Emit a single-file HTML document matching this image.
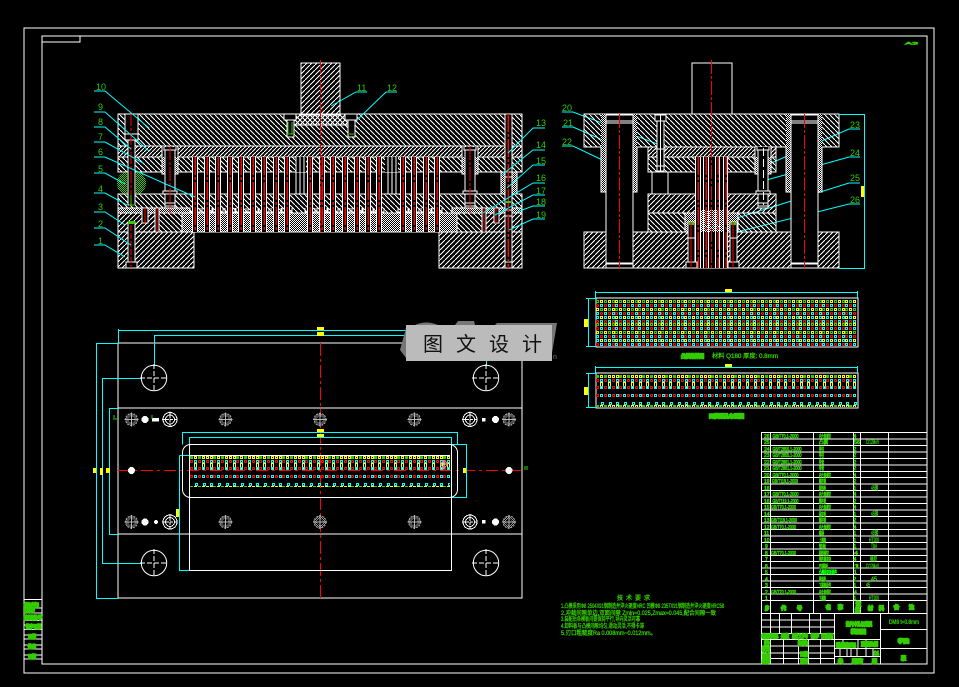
<!DOCTYPE html>
<html><head><meta charset="utf-8"><title>CAD</title>
<style>
html,body{margin:0;padding:0;background:#000;}
svg{display:block;}
text{font-family:"Liberation Sans","Noto Sans CJK SC",sans-serif;}
.l{fill:#3c0;font-size:9px;}
.b{fill:#3c0;stroke:#3c0;stroke-width:.6;font-size:5px;}
.s{fill:#3c0;stroke:#3c0;stroke-width:1.6;font-size:5px;}
.t{fill:#3c0;stroke:#3c0;stroke-width:.3;font-size:6px;}
</style></head><body>
<svg width="959" height="687" viewBox="0 0 959 687" xmlns="http://www.w3.org/2000/svg">
<defs>
<pattern id="hb" width="5" height="5" patternUnits="userSpaceOnUse"><path d="M-1 -1L6 6" stroke="#fff" stroke-width="1" shape-rendering="crispEdges"/></pattern>
<pattern id="hf" width="5" height="5" patternUnits="userSpaceOnUse"><path d="M-1 6L6 -1" stroke="#fff" stroke-width="1" shape-rendering="crispEdges"/></pattern>
<pattern id="hd" width="4" height="4" patternUnits="userSpaceOnUse"><path d="M-1 5L5 -1" stroke="#fff" stroke-width="1" shape-rendering="crispEdges"/></pattern>
<pattern id="st" width="2" height="2" patternUnits="userSpaceOnUse"><rect width="1" height="1" fill="#fff"/><rect x="1" y="1" width="1" height="1" fill="#fff"/></pattern>
<pattern id="gs" width="2" height="2" patternUnits="userSpaceOnUse"><rect width="1" height="1" fill="#3c0"/><rect x="1" y="1" width="1" height="1" fill="#3c0"/></pattern>
<pattern id="gy" width="2" height="2" patternUnits="userSpaceOnUse"><rect width="1" height="1" fill="#999"/><rect x="1" y="1" width="1" height="1" fill="#999"/></pattern>
<pattern id="p1" x="190" y="456" width="23" height="30" patternUnits="userSpaceOnUse">
<g fill="none" stroke-width="1">
<path d="M4.5 7.500h2v5h-2zM12.500 7.500h2v5h-2zM20.500 7.500h2v5h-2z" stroke="#ff0"/>
<path d="M4.500 .5h2v2h-2zM12.500 .5h2v2h-2zM16.500 .5h2v2h-2zM20.500 .5h2v2h-2z" stroke="#ff0"/>
<path d="M0 0h3v3h-3zM8 0h3v3h-3z" fill="#3c0" stroke="none"/>
<path d="M.5 4.500h2v2h-2zM8.500 4.500h2v2h-2zM16.500 4.500h2v2h-2zM.5 11.500h2v2h-2zM8.500 11.500h2v2h-2zM16.500 11.500h2v2h-2zM.5 19.500h2v2h-2zM8.500 19.500h2v2h-2zM16.500 19.500h2v2h-2z" stroke="#f00"/>
<path d="M4.500 4.500h2v2h-2zM12.500 4.500h2v2h-2zM20.500 4.500h2v2h-2zM4.500 11.500h2v2h-2zM12.500 11.500h2v2h-2zM20.500 11.500h2v2h-2zM4.500 19.500h2v2h-2zM12.500 19.500h2v2h-2zM20.500 19.500h2v2h-2zM5.500 27.500h2v2h-2zM13.500 27.500h2v2h-2zM20.500 27.500h2v2h-2z" stroke="#0ff"/>
</g></pattern>
<pattern id="p3" href="#p1" x="596" y="375"/>
<pattern id="p2" x="596" y="300" width="23" height="23" patternUnits="userSpaceOnUse">
<g fill="none" stroke-width="1">
<path d="M.5 .5h2v2h-2zM8.500 .5h2v2h-2zM16.500 .5h2v2h-2zM4.500 8.500h2v2h-2zM12.500 8.500h2v2h-2zM19.500 8.500h2v2h-2z" stroke="#3c0"/>
<path d="M4.500 .5h2v2h-2zM12.500 .5h2v2h-2zM19.500 .5h2v2h-2zM.5 8.500h2v2h-2zM8.500 8.500h2v2h-2zM16.500 8.500h2v2h-2zM4.500 16.500h2v2h-2zM12.500 16.500h2v2h-2zM19.500 16.500h2v2h-2z" stroke="#ff0"/>
<path d="M.5 4.500h2v2h-2zM8.500 4.500h2v2h-2zM16.500 4.500h2v2h-2zM4.500 12.500h2v2h-2zM12.500 12.500h2v2h-2zM19.500 12.500h2v2h-2zM.5 20.500h2v2h-2zM8.500 20.500h2v2h-2zM16.500 20.500h2v2h-2z" stroke="#f00"/>
<path d="M4.500 4.500h2v2h-2zM12.500 4.500h2v2h-2zM19.500 4.500h2v2h-2zM.5 12.500h2v2h-2zM8.500 12.500h2v2h-2zM16.500 12.500h2v2h-2zM.5 16.500h2v2h-2zM8.500 16.500h2v2h-2zM16.500 16.500h2v2h-2zM4.500 20.500h2v2h-2zM12.500 20.500h2v2h-2zM19.500 20.500h2v2h-2z" stroke="#0ff"/>
</g></pattern>
<g id="pu">
<rect x="-2.500" y="157" width="5" height="75" fill="#000"/>
<path d="M-2.500 157V232M2.500 157V232" stroke="#fff" fill="none"/>
<path d="M0 157V232" stroke="#f00" stroke-dasharray="18 2 3 2" fill="none" stroke-width="1.500"/>
<path d="M-5 212H-3M3 212H5M-5 208V213M5 208V213" stroke="#fff" fill="none"/>
</g>
<g id="post">
<rect x="-8" y="147" width="16" height="27" fill="#000"/>
<rect x="-8" y="157" width="3" height="17" fill="url(#st)"/><rect x="5" y="157" width="3" height="17" fill="url(#st)"/>
<path d="M-8 147V174H-5M8 147V174H5M-6 147V150H6V147" stroke="#fff" fill="none"/>
<rect x="-5" y="150" width="10" height="58" fill="#000" stroke="#fff"/>
<rect x="-7" y="191" width="14" height="3" fill="#000" stroke="#fff"/>
<path d="M-5 203H5M-5 206H5" stroke="#fff"/>
</g>
<g id="gb"><circle r="6" fill="url(#gy)"/><circle r="3" fill="#000"/><circle r="6" fill="none" stroke="#999" stroke-dasharray="2 1"/><path d="M-7 0H7M0 -7V7" stroke="#bbb"/></g>
<g id="wh"><circle r="7" fill="#000" stroke="#fff"/><circle r="4.500" fill="none" stroke="#fff"/><path d="M-8 0H8M0 -8V8" stroke="#fff" stroke-dasharray="3 1"/></g>
<g id="bc"><circle r="12.700" fill="none" stroke="#fff" shape-rendering="auto"/><path d="M-14 0H14M0 -14V14" stroke="#fff" stroke-dasharray="5 2"/></g>
</defs>

<g shape-rendering="crispEdges">
<!-- frame -->
<rect x="24" y="28" width="910" height="645" fill="none" stroke="#fff"/>
<rect x="42" y="36" width="885" height="628" fill="none" stroke="#fff"/>
<rect x="42" y="36" width="38" height="6" fill="none" stroke="#fff"/>
<text x="905" y="44.500" class="b" style="font-size:4px" textLength="13" lengthAdjust="spacingAndGlyphs">A3</text>

<!-- ============ FRONT VIEW ============ -->
<rect x="301" y="63" width="39" height="52" fill="url(#hf)" stroke="#fff"/>
<rect x="118" y="114" width="404" height="32" fill="url(#hb)" stroke="#fff"/>
<rect x="292" y="114" width="59" height="11" fill="url(#hf)"/>
<path d="M292 125H351V114" stroke="#fff" fill="none"/>
<rect x="118" y="146" width="404" height="11" fill="url(#hd)" stroke="#fff"/>
<rect x="118" y="157" width="404" height="15" fill="url(#hb)" stroke="#fff"/>
<rect x="118" y="172" width="382" height="22" fill="#000"/>
<path d="M118 172H522" stroke="#fff"/>
<rect x="118" y="194" width="404" height="19" fill="url(#hb)" stroke="#fff"/>
<rect x="118" y="213" width="40" height="19" fill="url(#hf)" stroke="#fff"/>
<rect x="158" y="213" width="24" height="19" fill="url(#hb)" stroke="#fff"/>
<rect x="182" y="213" width="275" height="19" fill="url(#st)" stroke="#fff"/>
<rect x="457" y="213" width="25" height="19" fill="url(#hb)" stroke="#fff"/>
<rect x="482" y="213" width="40" height="19" fill="url(#hf)" stroke="#fff"/>
<rect x="118" y="208" width="72" height="5" fill="#000"/><rect x="118" y="208" width="72" height="5" fill="url(#st)" stroke="#fff"/>
<rect x="452" y="208" width="70" height="5" fill="#000"/><rect x="452" y="208" width="70" height="5" fill="url(#st)" stroke="#fff"/>
<rect x="118" y="232" width="76" height="36" fill="url(#hf)" stroke="#fff"/>
<rect x="439" y="232" width="83" height="36" fill="url(#hf)" stroke="#fff"/>
<path d="M194 232H439" stroke="#fff"/>
<!-- gap extra lines -->
<path d="M296 172V194M300 172V194M304 172V194M388 172V194M392 172V194M396 172V194" stroke="#fff"/>
<rect x="296" y="157" width="10" height="15" fill="#000"/><rect x="385" y="157" width="13" height="15" fill="#000"/>
<path d="M296 157V172M300 157V172M304 157V172M388 157V172M392 157V172M396 157V172" stroke="#fff"/>
<!-- punches -->
<use href="#pu" x="195"/><use href="#pu" x="207"/><use href="#pu" x="218"/><use href="#pu" x="230"/><use href="#pu" x="241"/><use href="#pu" x="253"/><use href="#pu" x="264"/><use href="#pu" x="276"/><use href="#pu" x="287"/><use href="#pu" x="310"/><use href="#pu" x="322"/><use href="#pu" x="333"/><use href="#pu" x="345"/><use href="#pu" x="357"/><use href="#pu" x="368"/><use href="#pu" x="379"/><use href="#pu" x="403"/><use href="#pu" x="414"/><use href="#pu" x="426"/><use href="#pu" x="437"/>
<!-- posts -->
<use href="#post" x="170"/><use href="#post" x="470"/>
<path d="M170 146V214M470 146V214" stroke="#f00" stroke-dasharray="14 2 3 2"/>
<!-- left pin -->
<rect x="125" y="114" width="13" height="20" fill="#000" stroke="#fff"/>
<rect x="125" y="134" width="13" height="6" fill="#000" stroke="#fff"/>
<rect x="128" y="140" width="7" height="65" fill="#000" stroke="#fff"/>
<path d="M131 114V205" stroke="#f00" stroke-dasharray="12 2 3 2"/>
<path d="M127 172C120 172 117 178 117 183C117 189 120 194 127 194ZM136 172C143 172 146 178 146 183C146 189 143 194 136 194Z" fill="url(#gs)"/>
<path d="M131 195V206M129 205H135" stroke="#3c0"/>
<rect x="128" y="222" width="7" height="46" fill="#000" stroke="#fff"/>
<rect x="126" y="262" width="11" height="6" fill="#000" stroke="#fff"/>
<rect x="128" y="221" width="7" height="3" fill="#3c0"/>
<path d="M131 225V268" stroke="#f00" stroke-dasharray="6 2"/>
<!-- small screws -->
<rect x="142" y="208" width="6" height="15" fill="#000" stroke="#fff"/><path d="M145 208V224" stroke="#f00"/>
<rect x="155" y="208" width="4" height="24" fill="#000" stroke="#fff"/><path d="M157 208V232" stroke="#f00"/>
<rect x="482" y="208" width="4" height="24" fill="#000" stroke="#fff"/><path d="M484 208V232" stroke="#f00"/>
<rect x="494" y="208" width="5" height="15" fill="#000" stroke="#fff"/><path d="M496 208V224" stroke="#f00"/>
<!-- right pin -->
<rect x="501" y="172" width="16" height="22" fill="url(#st)" stroke="#fff"/>
<rect x="505" y="114" width="7" height="154" fill="#000" stroke="#fff"/>
<path d="M505 172H512M505 177H512M505 210H512M505 216H512M505 262H512" stroke="#fff"/>
<path d="M508 114V268" stroke="#f00" stroke-width="1.500" stroke-dasharray="18 2 3 2"/>
<rect x="506" y="201" width="5" height="2" fill="#3c0"/>
<!-- top screws -->
<rect x="284" y="114" width="12" height="6" fill="#000" stroke="#fff"/><rect x="287" y="120" width="7" height="17" fill="#000" stroke="#fff"/><path d="M288 122V134M292 122V134M287 134H294" stroke="#3c0"/>
<rect x="345" y="114" width="12" height="6" fill="#000" stroke="#fff"/><rect x="348" y="120" width="7" height="17" fill="#000" stroke="#fff"/><path d="M348 134H355" stroke="#3c0"/>
<!-- shank centre -->
<path d="M320.500 60V232" stroke="#f00" stroke-dasharray="14 2 3 2"/>
</g>

<g fill="none" stroke="#0ff" stroke-width="1">
<path d="M94 91H105L149 128M94 112H105L149 151M94 127H105L131 149M94 142H105L143 163M94 157H105L195 197M94 173H105L125 184M94 193H105L127 205M94 212H105L125 225M94 228H105L131 245M94 245H105L125 257"/>
<path d="M367 92H356L331 106M397 92H386L358 119"/>
<path d="M545 128H533L508 153M545 150H533L502 175M545 165H533L507 188M545 183H533L483 213M545 195H533L495 215M545 206H533L517 212M545 219H533L509 230"/>
<path d="M562 112H573L660 145M562 127H573L605 141M562 146H573L615 166M860 129H849L769 164M860 157H849L763 181M860 183H849L737 218M860 204H849L733 233"/>
</g>
<g class="l">
<text x="96" y="90" class="l">10</text><text x="98" y="110" class="l">9</text><text x="98" y="125" class="l">8</text><text x="98" y="140" class="l">7</text><text x="98" y="155" class="l">6</text><text x="98" y="172" class="l">5</text><text x="98" y="192" class="l">4</text><text x="98" y="210" class="l">3</text><text x="98" y="227" class="l">2</text><text x="98" y="244" class="l">1</text>
<text x="357" y="91" class="l">11</text><text x="387" y="91" class="l">12</text>
<text x="536" y="126" class="l">13</text><text x="536" y="148" class="l">14</text><text x="536" y="164" class="l">15</text><text x="536" y="181" class="l">16</text><text x="536" y="194" class="l">17</text><text x="536" y="205" class="l">18</text><text x="536" y="218" class="l">19</text>
<text x="562" y="111" class="l">20</text><text x="563" y="126" class="l">21</text><text x="562" y="145" class="l">22</text><text x="850" y="128" class="l">23</text><text x="850" y="156" class="l">24</text><text x="850" y="181" class="l">25</text><text x="850" y="203" class="l">26</text>
</g>

<!-- ============ SIDE VIEW ============ -->
<g shape-rendering="crispEdges">
<rect x="692" y="63" width="40" height="51" fill="#000" stroke="#fff"/>
<rect x="584" y="114" width="255" height="33" fill="url(#hb)" stroke="#fff"/>
<rect x="648" y="147" width="128" height="10" fill="url(#hd)" stroke="#fff"/>
<rect x="648" y="157" width="128" height="15" fill="url(#hb)" stroke="#fff"/>
<rect x="648" y="194" width="128" height="19" fill="url(#hf)" stroke="#fff"/>
<rect x="648" y="213" width="37" height="19" fill="url(#hb)" stroke="#fff"/>
<rect x="685" y="213" width="53" height="19" fill="url(#st)" stroke="#fff"/>
<rect x="738" y="213" width="38" height="19" fill="url(#hb)" stroke="#fff"/>
<rect x="584" y="232" width="255" height="36" fill="url(#hf)" stroke="#fff"/>
<path d="M652 172V194M668 172V194" stroke="#fff"/>
<!-- bushes & posts -->
<rect x="601" y="114" width="36" height="78" fill="#000"/>
<rect x="601" y="114" width="5" height="78" fill="url(#st)"/><rect x="632" y="114" width="5" height="78" fill="url(#st)"/>
<path d="M601 147V192H606M637 147V192H633" stroke="#fff" fill="none"/>
<rect x="606" y="114" width="27" height="154" fill="#000" stroke="#fff"/>
<path d="M606 115H633M606 121H633M606 123H633M606 263H633M606 264H633" stroke="#fff"/>
<rect x="786" y="114" width="36" height="78" fill="#000"/>
<rect x="786" y="114" width="5" height="78" fill="url(#st)"/><rect x="817" y="114" width="5" height="78" fill="url(#st)"/>
<path d="M786 147V192H791M822 147V192H818" stroke="#fff" fill="none"/>
<rect x="791" y="114" width="27" height="154" fill="#000" stroke="#fff"/>
<path d="M791 115H818M791 121H818M791 123H818M791 263H818M791 264H818" stroke="#fff"/>
<path d="M619.500 114V268M804.500 114V268" stroke="#f00" stroke-dasharray="14 2 3 2"/>
<!-- bolt -->
<rect x="655" y="115" width="11" height="6" fill="#000" stroke="#fff"/>
<rect x="657" y="121" width="7" height="50" fill="#000" stroke="#fff"/>
<path d="M655 149H666M655 166H666M660.500 115V171" stroke="#fff"/>
<use href="#post" x="763"/>
<path d="M763.500 148V205" stroke="#fff" stroke-dasharray="8 3"/>
<!-- centre punches -->
<rect x="696" y="157" width="32" height="111" fill="#000"/>
<rect x="700" y="210" width="24" height="22" fill="url(#st)"/>
<path d="M695.500 157V268M700.500 157V268M703.500 157V268M708.500 157V268M715.500 157V268M719.500 157V268M723.500 157V268M727.500 157V268" stroke="#fff"/>
<path d="M698 157V268M706 157V268M718 157V268M726 157V268" stroke="#f00" stroke-width="1.500" stroke-dasharray="18 2 3 2"/>
<!-- pins -->
<rect x="688" y="222" width="7" height="46" fill="#000" stroke="#fff"/><rect x="686" y="262" width="11" height="6" fill="#000" stroke="#fff"/><rect x="689" y="222" width="5" height="3" fill="#3c0"/><path d="M691 222V268" stroke="#f00"/><path d="M688 238H695" stroke="#fff"/>
<rect x="730" y="222" width="7" height="46" fill="#000" stroke="#fff"/><rect x="728" y="262" width="11" height="6" fill="#000" stroke="#fff"/><rect x="731" y="222" width="5" height="3" fill="#3c0"/><path d="M733 222V268" stroke="#f00"/><path d="M730 238H737" stroke="#fff"/>
<path d="M711.500 60V268" stroke="#f00" stroke-dasharray="14 2 3 2"/>
<!-- dims -->
<path d="M839 114.500H865M839 268.500H865M864.500 114V269" stroke="#0ff" fill="none"/>
<rect x="861" y="186" width="3" height="11" fill="#ff0"/>

<!-- ============ STRIP PLATES ============ -->
<rect x="596" y="298" width="262" height="49" fill="#000" stroke="#fff"/>
<rect x="596" y="300" width="261" height="46" fill="url(#p2)"/>
<path d="M596 292.500H857M595.500 291V298M857.500 291V298M588.500 298V347M586 298.500H596M586 346.500H596" stroke="#0ff" fill="none"/>
<rect x="584" y="319" width="4" height="8" fill="#ff0"/>
<rect x="725" y="289" width="7" height="3" fill="#ff0"/>
<rect x="596" y="373" width="262" height="35" fill="#000" stroke="#fff"/>
<rect x="596" y="375" width="261" height="32" fill="url(#p3)"/>
<path d="M596 367.500H857M595.500 366V373M857.500 366V373M588.500 373V407M586 373.500H596M586 407.500H596" stroke="#0ff" fill="none"/>
<rect x="584" y="387" width="4" height="8" fill="#ff0"/>
<rect x="725" y="364" width="7" height="3" fill="#ff0"/>
</g>
<text x="681" y="358" class="s" textLength="23" lengthAdjust="spacingAndGlyphs">凸模排样图</text>
<text x="712" y="358" class="t" textLength="66" lengthAdjust="spacingAndGlyphs">材料 Q180 厚度: 0.8mm</text>
<text x="709" y="418" class="s" textLength="35" lengthAdjust="spacingAndGlyphs">凹模型孔布置图</text>

<!-- ============ PLAN VIEW ============ -->
<g shape-rendering="crispEdges">
<rect x="118" y="343" width="404" height="255" fill="none" stroke="#fff"/>
<path d="M118 408H522M118 534H522" stroke="#fff"/>
<path d="M320.500 343V598" stroke="#f00" stroke-dasharray="13 3 3 3"/>
<path d="M118 470.500H522" stroke="#f00" stroke-dasharray="12 4 3 4"/>
<path d="M118 330.500H522M118.500 329V343M154.500 335.500H522M154.500 335V366M486.500 335V366M96 343.500H118M96 598.500H118M96.500 343V598M102.500 378V563M102 378.500H142M102 563.500H142M109.500 408V534M109 408.500H118M109 534.500H118" stroke="#0ff" fill="none"/>
<rect x="317" y="327" width="7" height="3" fill="#ff0"/><rect x="317" y="332" width="7" height="4" fill="#ff0"/>
<rect x="93" y="468" width="3" height="5" fill="#ff0"/><rect x="100" y="468" width="3" height="7" fill="#ff0"/><rect x="106" y="468" width="4" height="5" fill="#ff0"/>
<use href="#bc" x="154" y="378"/><use href="#bc" x="486" y="378"/><use href="#bc" x="154" y="563"/><use href="#bc" x="486" y="563"/>
<use href="#gb" x="131.500" y="419.500"/><use href="#gb" x="225.500" y="419.500"/><use href="#gb" x="320" y="419.500"/><use href="#gb" x="414.500" y="419.500"/><use href="#gb" x="509" y="419.500"/>
<use href="#gb" x="131.500" y="522"/><use href="#gb" x="225.500" y="522"/><use href="#gb" x="320" y="522"/><use href="#gb" x="414.500" y="522"/><use href="#gb" x="509" y="522"/>
<use href="#wh" x="170" y="419.500"/><use href="#wh" x="470" y="419.500"/><use href="#wh" x="170" y="522"/><use href="#wh" x="470" y="522"/>
<g fill="#fff"><circle cx="145" cy="419.500" r="3.500"/><circle cx="145" cy="522" r="3.500"/><circle cx="495.500" cy="419.500" r="3.500"/><circle cx="495.500" cy="522" r="3.500"/><circle cx="131.500" cy="470.500" r="3.500"/><circle cx="509" cy="470.500" r="3.500"/><rect x="152" y="418" width="7" height="3.500"/><circle cx="156" cy="522" r="2"/><rect x="482" y="418" width="3.500" height="3.500"/><rect x="482" y="520" width="3.500" height="3.500"/></g>
<path d="M114 415V420M115 419H118" stroke="#3c0"/>
<path d="M152 415V419M525 466V470M527 466V470" stroke="#3c0"/>
<!-- die -->
<path d="M182.500 444.500V432.500H457.500V444M189.500 444V437.500H451.500V444M179.500 455.500V570.500H189M179.500 455.500H189M452 444.500H466.500V497.500H452M466.500 444V497" stroke="#0ff" fill="none"/>
<rect x="182.500" y="444.500" width="275" height="53" rx="8" ry="8" fill="none" stroke="#fff" shape-rendering="auto"/>
<rect x="189.500" y="444.500" width="262" height="126" fill="none" stroke="#fff"/>
<rect x="190" y="455" width="260" height="1" fill="#fff"/>
<rect x="190" y="456" width="260" height="31" fill="url(#p1)"/>
<rect x="176" y="509" width="3" height="8" fill="#ff0"/>
<rect x="317" y="429" width="7" height="3" fill="#ff0"/><rect x="317" y="434" width="7" height="3" fill="#ff0"/>
<rect x="463" y="468" width="3" height="5" fill="#ff0"/>
<path d="M440 464H448M444 460V469" stroke="#fff"/><circle cx="444" cy="464" r="3" fill="none" stroke="#f66"/>
</g>

<!-- ============ WATERMARK ============ -->
<g fill="#777">
<path d="M400 350L406 328V358Z"/>
<path d="M415 325Q426 320 438 325ZM455 325L458 321H474L475 325ZM495 325L497 323H557L552 353V325Z"/>
<path d="M406 358H434L425 361H411Z"/>
<text x="553" y="359" font-size="7" fill="#777">n</text>
</g>
<rect x="406" y="325" width="146" height="36" fill="#bbb"/>
<text x="423 456 489 522" y="351" font-size="20" fill="#111">图文设计</text>

<!-- ============ TECH REQUIREMENTS ============ -->
<text x="617" y="600" class="t" textLength="33" lengthAdjust="spacing">技术要求</text>
<text x="561" y="608" class="t" textLength="163" lengthAdjust="spacingAndGlyphs">1.凸模采用Φ8 2504X91钢制造并淬火硬度HRC 凹模Φ8 2357X91钢制造并淬火硬度HRC58</text>
<text x="561" y="615" class="t" textLength="155" lengthAdjust="spacingAndGlyphs">2.冲裁间隙单边,双面间隙 Zmin=0.025,Zmax=0.045,配合间隙一致</text>
<text x="561" y="621" class="t" textLength="79" lengthAdjust="spacingAndGlyphs">3.装配后各模板间要保持平行,导向灵活可靠</text>
<text x="561" y="628" class="t" textLength="83" lengthAdjust="spacingAndGlyphs">4.卸料板与凸模间隙均匀,滑动灵活,不得卡滞</text>
<text x="561" y="635" class="t" textLength="95" lengthAdjust="spacingAndGlyphs">5.刃口粗糙度Ra 0.008mm~0.012mm。</text>

<!-- ============ TABLE ============ -->
<g shape-rendering="crispEdges" fill="none" stroke="#fff">
<path d="M761 432.500H927M761 439H927M761 445.500H927M761 452H927M761 458.500H927M761 465H927M761 471.500H927M761 477.500H927M761 484H927M761 490.500H927M761 497H927M761 503.500H927M761 510H927M761 516.500H927M761 523H927M761 529.500H927M761 536H927M761 542.500H927M761 549H927M761 555.500H927M761 561.500H927M761 568H927M761 574.500H927M761 581H927M761 587.500H927M761 594H927M761 600.500H927M761 613.500H927"/>
<path d="M761.500 432V664M770.500 432V613M813.500 432V613M853.500 432V613M860.500 432V613M888.500 432V613"/>
<path d="M761 620H834M761 627H834M761 633.500H834M761 639.500H834M761 646H834M761 653H834M761 658.500H834"/>
<path d="M770.500 613V664M779.500 613V634M791.500 613V634M809.500 613V634M820.500 613V634M783.500 639V664M798.500 639V664M808.500 639V664M820.500 639V664"/>
<path d="M834.500 613V664M880.500 613V664M834 639.500H880M834 648.500H880M834 656.500H880M880 629.500H927M880 648.500H927M843 639V648M851 648V656M858 639V648M866 639V656M873 648V656M840 648V656M847 648V656M857 648V656"/>
</g>
<g>
<text class="b" x="764" y="438">26</text><text class="b" x="772.500" y="438" textLength="26" lengthAdjust="spacingAndGlyphs">GB/T70.1-2000</text><text class="b" x="819" y="438" textLength="12" lengthAdjust="spacingAndGlyphs">内六角螺钉</text><text class="b" x="853.500" y="438">4</text>
<text class="b" x="764" y="444">25</text><text class="b" x="819" y="444" textLength="9" lengthAdjust="spacingAndGlyphs">凸模</text><text class="b" x="854" y="444" textLength="6" lengthAdjust="spacingAndGlyphs">56</text><text class="t" x="866" y="444" textLength="13" lengthAdjust="spacingAndGlyphs">Cr12MoV</text>
<text class="b" x="764" y="451">24</text><text class="b" x="772.500" y="451" textLength="29" lengthAdjust="spacingAndGlyphs">GB/T2855.1-2000</text><text class="b" x="819" y="451" textLength="5" lengthAdjust="spacingAndGlyphs">导柱</text><text class="b" x="853.500" y="451">2</text>
<text class="b" x="764" y="457">23</text><text class="b" x="772.500" y="457" textLength="29" lengthAdjust="spacingAndGlyphs">GB/T2855.1-2000</text><text class="b" x="819" y="457" textLength="5" lengthAdjust="spacingAndGlyphs">导柱</text><text class="b" x="853.500" y="457">2</text>
<text class="b" x="764" y="464">22</text><text class="b" x="772.500" y="464" textLength="29" lengthAdjust="spacingAndGlyphs">GB/T2861.1-2000</text><text class="b" x="819" y="464" textLength="5" lengthAdjust="spacingAndGlyphs">导套</text><text class="b" x="853.500" y="464">2</text>
<text class="b" x="764" y="470">21</text><text class="b" x="772.500" y="470" textLength="29" lengthAdjust="spacingAndGlyphs">GB/T2861.1-2000</text><text class="b" x="819" y="470" textLength="5" lengthAdjust="spacingAndGlyphs">导套</text><text class="b" x="853.500" y="470">2</text>
<text class="b" x="764" y="477">20</text><text class="b" x="772.500" y="477" textLength="26" lengthAdjust="spacingAndGlyphs">GB/T70.1-2000</text><text class="b" x="819" y="477" textLength="12" lengthAdjust="spacingAndGlyphs">内六角螺钉</text><text class="b" x="853.500" y="477">4</text>
<text class="b" x="764" y="483">19</text><text class="b" x="772" y="483" textLength="26" lengthAdjust="spacingAndGlyphs">GB/T119.1-2000</text><text class="b" x="819" y="483" textLength="7" lengthAdjust="spacingAndGlyphs">圆柱销</text><text class="b" x="853.500" y="483">2</text>
<text class="b" x="764" y="490">18</text><text class="b" x="819" y="490" textLength="7" lengthAdjust="spacingAndGlyphs">卸料板</text><text class="b" x="853.500" y="490">1</text><text class="t" x="871" y="490" textLength="7" lengthAdjust="spacingAndGlyphs">45钢</text>
<text class="b" x="764" y="496">17</text><text class="b" x="772.500" y="496" textLength="26" lengthAdjust="spacingAndGlyphs">GB/T70.1-2000</text><text class="b" x="819" y="496" textLength="12" lengthAdjust="spacingAndGlyphs">内六角螺钉</text><text class="b" x="853.500" y="496">4</text>
<text class="b" x="764" y="503">16</text><text class="b" x="772.500" y="503" textLength="26" lengthAdjust="spacingAndGlyphs">GB/T119.1-2000</text><text class="b" x="819" y="503" textLength="7" lengthAdjust="spacingAndGlyphs">圆柱销</text><text class="b" x="853.500" y="503">2</text>
<text class="b" x="764" y="509">15</text><text class="b" x="771" y="509" textLength="25" lengthAdjust="spacingAndGlyphs">GB/T70.1-2000</text><text class="b" x="819" y="509" textLength="12" lengthAdjust="spacingAndGlyphs">内六角螺钉</text><text class="b" x="853.500" y="509">4</text>
<text class="b" x="764" y="516">14</text><text class="b" x="819" y="516" textLength="7" lengthAdjust="spacingAndGlyphs">固定板</text><text class="b" x="853.500" y="516">1</text><text class="t" x="871" y="516" textLength="7" lengthAdjust="spacingAndGlyphs">45钢</text>
<text class="b" x="764" y="522">13</text><text class="b" x="771" y="522" textLength="26" lengthAdjust="spacingAndGlyphs">GB/T119.1-2000</text><text class="b" x="819" y="522" textLength="7" lengthAdjust="spacingAndGlyphs">圆柱销</text><text class="b" x="853.500" y="522">2</text>
<text class="b" x="764" y="529">12</text><text class="b" x="771" y="529" textLength="25" lengthAdjust="spacingAndGlyphs">GB/T70.1-2000</text><text class="b" x="819" y="529" textLength="12" lengthAdjust="spacingAndGlyphs">内六角螺钉</text><text class="b" x="853.500" y="529">4</text>
<text class="b" x="764" y="535">11</text><text class="b" x="819" y="535" textLength="5" lengthAdjust="spacingAndGlyphs">模柄</text><text class="b" x="853.500" y="535">1</text><text class="t" x="871" y="535" textLength="7" lengthAdjust="spacingAndGlyphs">45钢</text>
<text class="b" x="764" y="542">10</text><text class="b" x="819" y="542" textLength="7" lengthAdjust="spacingAndGlyphs">上模座</text><text class="b" x="853.500" y="542">1</text><text class="t" x="869" y="542" textLength="10" lengthAdjust="spacingAndGlyphs">HT200</text>
<text class="b" x="765" y="548">9</text><text class="b" x="819" y="548" textLength="7" lengthAdjust="spacingAndGlyphs">垫板</text><text class="b" x="853.500" y="548">1</text><text class="t" x="871" y="548" textLength="6" lengthAdjust="spacingAndGlyphs">T8A</text>
<text class="b" x="765" y="555">8</text><text class="b" x="771" y="555" textLength="25" lengthAdjust="spacingAndGlyphs">GB/T70.1-2000</text><text class="b" x="819" y="555" textLength="10" lengthAdjust="spacingAndGlyphs">卸料螺钉</text><text class="b" x="854" y="555" textLength="4" lengthAdjust="spacingAndGlyphs">4</text>
<text class="b" x="765" y="561">7</text><text class="b" x="819" y="561" textLength="12" lengthAdjust="spacingAndGlyphs">弹性橡胶块</text><text class="b" x="853.500" y="561">4</text><text class="t" x="870" y="561" textLength="7" lengthAdjust="spacingAndGlyphs">橡胶</text>
<text class="b" x="765" y="568">6</text><text class="b" x="819" y="568" textLength="9" lengthAdjust="spacingAndGlyphs">凹模板</text><text class="b" x="854" y="568" textLength="6" lengthAdjust="spacingAndGlyphs">1</text><text class="t" x="866" y="568" textLength="13" lengthAdjust="spacingAndGlyphs">Cr12MoV</text>
<text class="b" x="765" y="574">5</text><text class="b" x="819" y="574" textLength="18" lengthAdjust="spacingAndGlyphs" style="fill:#0f0;stroke:#0f0">凸模固定板组件</text><text class="b" x="854" y="574">1</text>
<text class="b" x="765" y="581">4</text><text class="b" x="819" y="581" textLength="7" lengthAdjust="spacingAndGlyphs">导料板</text><text class="b" x="853.500" y="581">2</text><text class="t" x="871" y="581" textLength="6" lengthAdjust="spacingAndGlyphs">45</text>
<text class="b" x="765" y="587">3</text><text class="b" x="819" y="587" textLength="12" lengthAdjust="spacingAndGlyphs">下模座组件</text><text class="b" x="853.500" y="587">1</text><text class="t" x="866" y="587" textLength="4" lengthAdjust="spacingAndGlyphs">45</text>
<text class="b" x="765" y="594">2</text><text class="b" x="771" y="594" textLength="25" lengthAdjust="spacingAndGlyphs">GB/T70.1-2000</text><text class="b" x="819" y="594" textLength="12" lengthAdjust="spacingAndGlyphs">内六角螺钉</text><text class="b" x="854" y="594">4</text>
<text class="b" x="765" y="600">1</text><text class="b" x="819" y="600" textLength="7" lengthAdjust="spacingAndGlyphs">下模座</text><text class="b" x="853.500" y="600">1</text><text class="t" x="869" y="600" textLength="10" lengthAdjust="spacingAndGlyphs">HT200</text>
<text class="s" x="765" y="610" textLength="4" lengthAdjust="spacingAndGlyphs">序</text><text class="s" x="781" y="610">代</text><text class="s" x="797" y="610">号</text>
<text class="s" x="826" y="609" textLength="5" lengthAdjust="spacingAndGlyphs">名</text><text class="s" x="838" y="609">称</text>
<text class="s" x="856" y="606">数</text><text class="s" x="855" y="612">量</text><text class="s" x="868" y="610">材</text><text class="s" x="879" y="610">料</text><text class="s" x="894" y="609">备</text><text class="s" x="909" y="609">注</text>
<text class="s" x="762" y="638" textLength="16" lengthAdjust="spacingAndGlyphs">标记</text><text class="s" x="781" y="638" textLength="8" lengthAdjust="spacingAndGlyphs">处数</text><text class="s" x="792" y="638" textLength="16" lengthAdjust="spacingAndGlyphs">更改文件号</text><text class="s" x="811" y="638" textLength="8" lengthAdjust="spacingAndGlyphs">签字</text><text class="s" x="821" y="638" textLength="12" lengthAdjust="spacingAndGlyphs">日期</text>
<text class="s" x="764" y="645" textLength="6" lengthAdjust="spacingAndGlyphs">设计</text><text class="s" x="762" y="651" textLength="8" lengthAdjust="spacingAndGlyphs">校对</text><text class="s" x="762" y="658" textLength="8" lengthAdjust="spacingAndGlyphs">审核</text><text class="s" x="762" y="663" textLength="8" lengthAdjust="spacingAndGlyphs">批准</text>
<text class="s" x="798" y="645" textLength="10" lengthAdjust="spacingAndGlyphs">标准</text><text class="s" x="800" y="656" textLength="8" lengthAdjust="spacingAndGlyphs">日期</text><text class="s" x="800" y="663" textLength="8" lengthAdjust="spacingAndGlyphs">日期</text>
<text class="s" x="846" y="626" textLength="26" lengthAdjust="spacingAndGlyphs">垫片冲孔级进模</text><text class="s" x="851" y="633.500" textLength="15" lengthAdjust="spacingAndGlyphs">装配图</text>
<text class="t" x="889" y="624" textLength="30" lengthAdjust="spacingAndGlyphs">DM8 t=0.8mm</text>
<text class="s" x="898" y="643" textLength="11" lengthAdjust="spacingAndGlyphs">学院</text>
<text class="s" x="901" y="660" textLength="5" lengthAdjust="spacingAndGlyphs">张</text>
<text class="s" x="836" y="647" textLength="20" lengthAdjust="spacingAndGlyphs">阶段标记</text><text class="s" x="861" y="646" textLength="17" lengthAdjust="spacingAndGlyphs">重量比例</text>
<text class="s" x="874" y="655" textLength="5" lengthAdjust="spacingAndGlyphs">1:1</text>
<text class="s" x="838" y="663" textLength="5" lengthAdjust="spacingAndGlyphs">共</text><text class="s" x="852" y="663" textLength="11" lengthAdjust="spacingAndGlyphs">张第</text><text class="s" x="872" y="663" textLength="5" lengthAdjust="spacingAndGlyphs">张</text>
</g>

<!-- ============ LEFT STRIP ============ -->
<g shape-rendering="crispEdges">
<path d="M24 599.500H42M24 608H42M24 613H42M24 620.500H42M24 625H42M24 629.500H42M24 635H42M24 639H42M24 645H42M24 649H42M24 655H42M24 659H42" stroke="#fff"/>
</g>
<text x="24" y="607" class="s" textLength="15" lengthAdjust="spacingAndGlyphs">借通用件登记</text>
<text x="24" y="612" class="s" textLength="11" lengthAdjust="spacingAndGlyphs">旧底图总号</text>
<text x="24" y="619.500" class="s" textLength="18" lengthAdjust="spacingAndGlyphs">底图总号</text>
<text x="26" y="628.500" class="s" textLength="15" lengthAdjust="spacingAndGlyphs">签字日期</text>
<text x="28" y="638.500" class="s" textLength="8" lengthAdjust="spacingAndGlyphs">日期</text>
<text x="28" y="648.500" class="s" textLength="8" lengthAdjust="spacingAndGlyphs">签字</text>
<text x="28" y="658.500" class="s" textLength="8" lengthAdjust="spacingAndGlyphs">日期</text>
</svg>
</body></html>
